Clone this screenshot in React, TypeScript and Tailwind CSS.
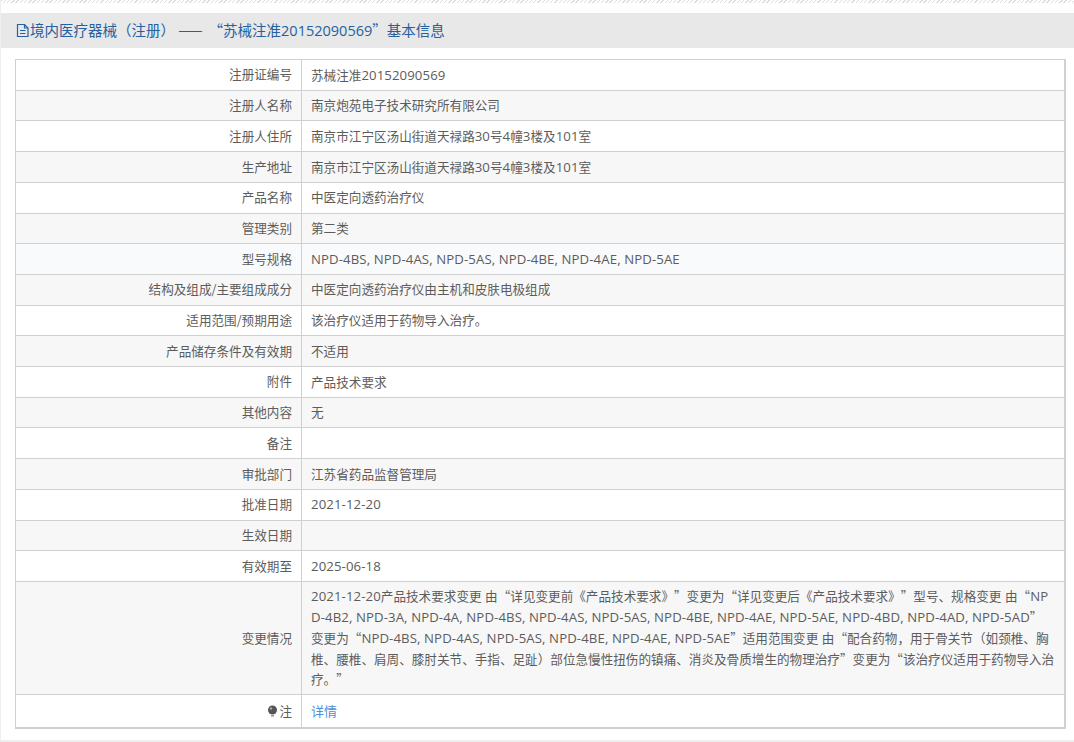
const rows = [
  { label: "注册证编号", value: "苏械注准20152090569" },
  { label: "注册人名称", value: "南京炮苑电子技术研究所有限公司" },
  { label: "注册人住所", value: "南京市江宁区汤山街道天禄路30号4幢3楼及101室" },
  { label: "生产地址", value: "南京市江宁区汤山街道天禄路30号4幢3楼及101室" },
  { label: "产品名称", value: "中医定向透药治疗仪" },
  { label: "管理类别", value: "第二类" },
  { label: "型号规格", value: "NPD-4BS, NPD-4AS, NPD-5AS, NPD-4BE, NPD-4AE, NPD-5AE" },
  { label: "结构及组成/主要组成成分", value: "中医定向透药治疗仪由主机和皮肤电极组成" },
  { label: "适用范围/预期用途", value: "该治疗仪适用于药物导入治疗。" },
  { label: "产品储存条件及有效期", value: "不适用" },
  { label: "附件", value: "产品技术要求" },
  { label: "其他内容", value: "无" },
  { label: "备注", value: "" },
  { label: "审批部门", value: "江苏省药品监督管理局" },
  { label: "批准日期", value: "2021-12-20" },
  { label: "生效日期", value: "" },
  { label: "有效期至", value: "2025-06-18" },
  {
    label: "变更情况",
    value:
      "2021-12-20产品技术要求变更 由“详见变更前《产品技术要求》”变更为“详见变更后《产品技术要求》”型号、规格变更 由“NPD-4B2, NPD-3A, NPD-4A, NPD-4BS, NPD-4AS, NPD-5AS, NPD-4BE, NPD-4AE, NPD-5AE, NPD-4BD, NPD-4AD, NPD-5AD”\u200B变更为“NPD-4BS, NPD-4AS, NPD-5AS, NPD-4BE, NPD-4AE, NPD-5AE”适用范围变更 由“配合药物\uFF0C用于骨关节\uFF08如颈椎、胸椎、腰椎、肩周、膝肘关节、手指、足趾\uFF09部位急慢性扭伤的镇痛、消炎及骨质增生的物理治疗”变更为“该治疗仪适用于药物导入治疗。”",
  },
];

// latin runs sit a little larger than the CJK around them
function Mixed({ text }: { text: string }) {
  const parts = text.match(/[\x20-\x7e]+|[^\x20-\x7e]+/g) ?? [];
  return (
    <>
      {parts.map((part, i) =>
        /^[\x20-\x7e]/.test(part) ? (
          <span key={i} className="font-['Open_Sans'] text-[13.2px] tracking-[0.1px]">
            {part}
          </span>
        ) : (
          <span key={i}>{part}</span>
        ),
      )}
    </>
  );
}

export default function App() {
  return (
    <div className="h-[742px] overflow-hidden bg-[#eeeeee] text-[12.6px] font-['Noto_Sans_CJK_SC','Open_Sans',sans-serif] text-[#5c5c5c] [text-spacing-trim:space-all]">
      <div className="ml-px h-[740px] bg-white">
        <div className="h-[3px] bg-[repeating-linear-gradient(135deg,#dddddd_0,#dddddd_1px,#ffffff_1px,#ffffff_3px)]" />
        <div className="mt-[10px] flex h-[35px] items-center bg-[#e8e8e8] pl-[15px] text-[14.5px] text-[#25609f]">
          <svg width="14" height="15" viewBox="0 0 14 15" fill="none" stroke="currentColor" strokeWidth="1.2">
            <path d="M1.500 1.500h7L12 5v8.500H1.500z" />
            <path d="M8.500 1.500V5H12M4 7.500h5.500M4 10.500h5.500" />
          </svg>
          <span>
            境内医疗器械{"\uFF08"}注册{"\uFF09"} ——
            <span className="ml-[6px]">
              “苏械注准<span className="font-['Open_Sans']">20152090569</span>”基本信息
            </span>
          </span>
        </div>
        <div className="ml-[14px] mr-[8px] mt-[11px] border-2 border-t border-l border-[#d0d0d0]">
          {rows.map((row, i) => (
            <div
              key={row.label}
              className={`flex border-b border-[#d0d0d0] ${
                row.label === "型号规格" ? "bg-[#f8fafc]" : i % 2 === 1 ? "bg-[#f7f7f7]" : "bg-white"
              }`}
            >
              <div className="flex w-[286px] shrink-0 items-center justify-end border-r border-[#d0d0d0] pr-[9px]">
                {row.label}
              </div>
              <div className="min-h-[29.700px] flex-1 break-all px-[9px] py-[4.500px] leading-[20.700px]">
                <Mixed text={row.value} />
              </div>
            </div>
          ))}
          <div className="flex bg-white">
            <div className="flex w-[286px] shrink-0 items-center justify-end border-r border-[#d0d0d0] pr-[9px]">
              <svg width="11" height="12" viewBox="0 0 11 12" className="mr-px">
                <circle cx="5.500" cy="5" r="4.500" fill="#555" />
                <circle cx="4" cy="3.500" r="1.200" fill="#aaa" />
                <rect x="4" y="10.200" width="3" height="1.300" fill="#888" />
              </svg>
              注
            </div>
            <div className="h-[32px] flex-1 px-[9px] py-[5px] text-[13px] leading-[22px] text-[#4a90d9]">详情</div>
          </div>
        </div>
      </div>
    </div>
  );
}
